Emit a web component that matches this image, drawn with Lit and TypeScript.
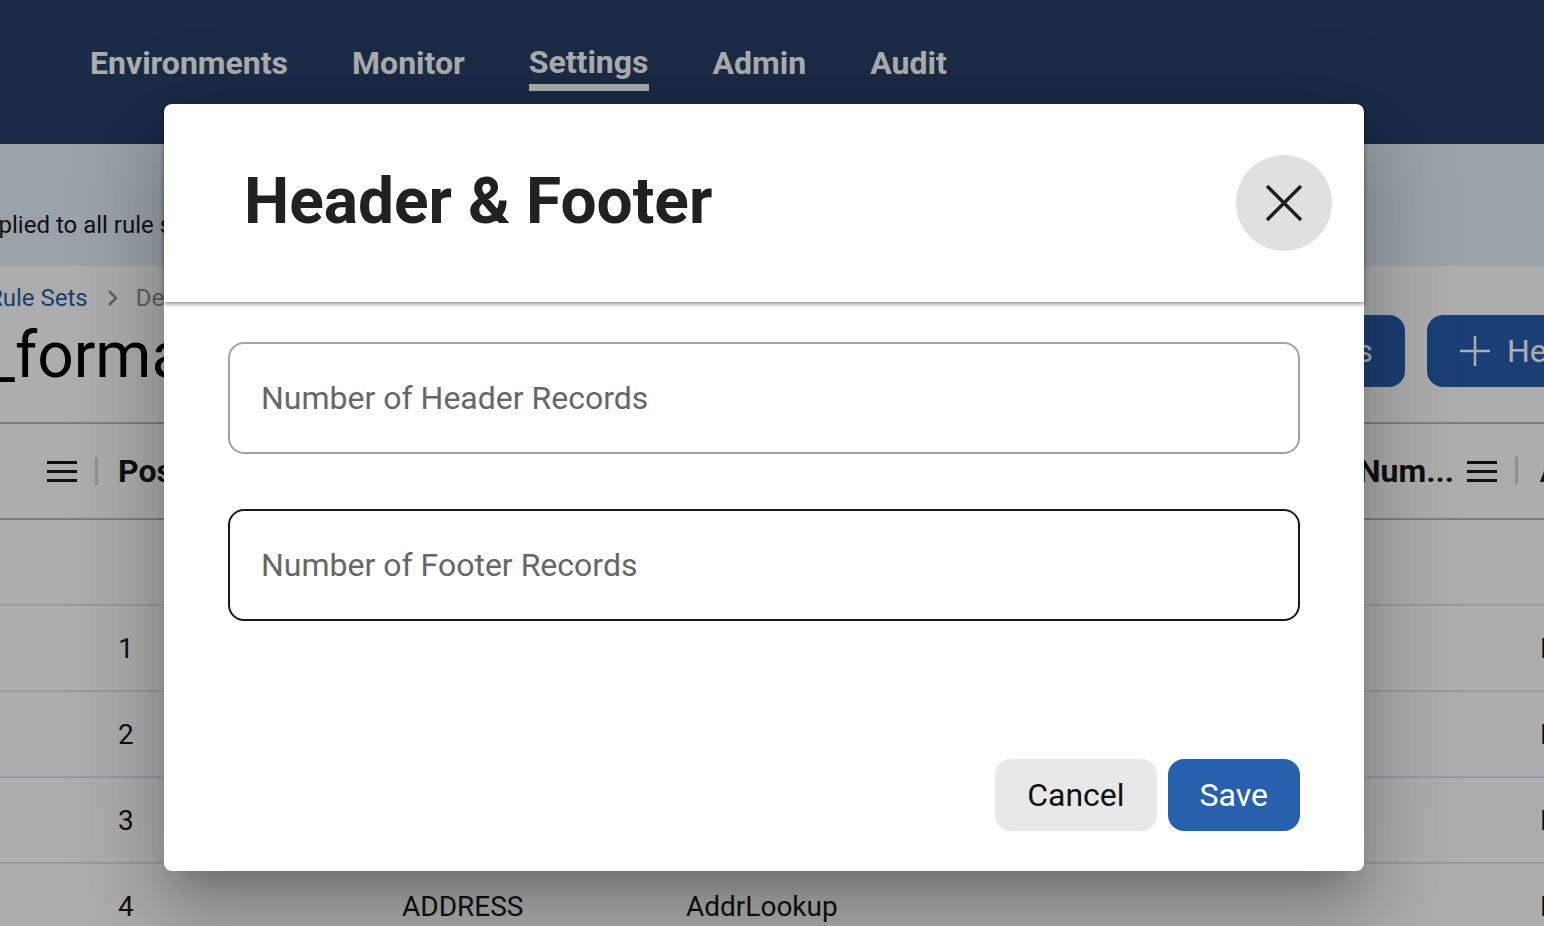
import { LitElement, html, css } from 'lit'
import { customElement } from 'lit/decorators.js'

const navItems = ['Environments', 'Monitor', 'Settings', 'Admin', 'Audit']
const rows = [
  ['', '', '', ''],
  ['1', '', '', 'E'],
  ['2', '', '', 'E'],
  ['3', '', '', 'E'],
  ['4', 'ADDRESS', 'AddrLookup', 'E']
]

const menuIcon = html`
  <svg class="menu-icon" width="30" height="21" viewBox="0 0 30 21" aria-hidden="true">
    <path d="M0 1.5h30M0 10.5h30M0 19.5h30" stroke="#191919" stroke-width="3" fill="none"></path>
  </svg>
`

@customElement('app-root')
export class AppRoot extends LitElement {
  static styles = [
    css`
      * {box-sizing: border-box}

      :host {
        display: block;
        position: relative;
        width: 100%;
        height: 100vh;
        overflow: hidden;
        background: #fff;
        color: #191919;
        font-family: Roboto, "Liberation Sans", sans-serif;
      }

      .nav {
        display: flex;
        align-items: flex-start;
        gap: 64px;
        height: 144px;
        padding: 40px 0 0 90px;
        background: #283f68;
      }

      .nav-item {
        margin-top: 1px;
        color: #fff;
        font-size: 32px;
        font-weight: 700;
        line-height: 44px;
      }

      .nav-item.active {
        margin-top: 0;
        border-bottom: 7px solid #fff;
      }

      .banner {
        display: flex;
        align-items: center;
        height: 122px;
        padding-top: 40px;
        background: #e5f0fb;
        font-size: 24px;
      }

      .banner span {
        margin-left: -28px;
        white-space: nowrap;
      }

      .toolbar {
        display: flex;
        justify-content: space-between;
        height: 156px;
      }

      .crumbs {
        display: flex;
        align-items: center;
        height: 28px;
        margin-top: 18px;
        font-size: 24px;
        color: #8f8f8f;
      }

      .crumb-link {
        margin-left: -12px;
        color: #275dac;
      }

      .crumbs svg {
        margin: 0 17px 0 19px;
      }

      h2 {
        margin: 8px 0 0 -14px;
        font-size: 64px;
        font-weight: 400;
        line-height: 72px;
        white-space: nowrap;
        color: #000;
      }

      .actions {
        display: flex;
        flex: 0 0 344px;
        gap: 22px;
        height: 72px;
        margin-top: 49px;
        overflow: hidden;
      }

      .action {
        display: flex;
        flex: none;
        align-items: center;
        height: 72px;
        border-radius: 16px;
        background: #275dac;
        color: #fff;
        font-size: 32px;
        white-space: nowrap;
      }

      .action.rules {
        justify-content: flex-end;
        width: 205px;
        padding-right: 32px;
      }

      .action.add {
        gap: 17px;
        width: 220px;
        padding-left: 33px;
      }

      .head-row, .row {
        display: grid;
        grid-template-columns: 118px 284px 284px 1fr auto;
        align-items: center;
        white-space: nowrap;
      }

      .head-row {
        height: 98px;
        border-top: 2px solid #b9b9b9;
        border-bottom: 2px solid #b9b9b9;
        font-size: 32px;
        font-weight: 700;
      }

      .head-left {
        display: flex;
        align-items: center;
        gap: 18px;
        padding-left: 47px;
      }

      .head-right {
        display: flex;
        grid-column: 5;
        align-items: center;
        margin-right: -24px;
      }

      .head-right .menu-icon {
        margin: 0 18px 0 13px;
      }

      .head-right b {
        width: 28px;
        margin-left: 22px;
        font-size: 32px;
      }

      .divider {
        flex: none;
        width: 3px;
        height: 28px;
        background: #d4d4d4;
      }

      .row {
        height: 86px;
        border-bottom: 2px solid #e2e5f0;
        font-size: 28px;
      }

      .row .end {
        grid-column: 5;
        width: 4px;
        margin-right: 0;
      }

      .scrim {
        position: absolute;
        inset: 0;
        background: rgba(0, 0, 0, .32);
      }

      .modal {
        position: absolute;
        top: 104px;
        left: 164px;
        display: flex;
        flex-direction: column;
        width: 1200px;
        height: 767px;
        border-radius: 8px;
        background: #fff;
        box-shadow:
          0 22px 30px -14px rgba(0, 0, 0, .2),
          0 48px 76px 6px rgba(0, 0, 0, .14),
          0 18px 92px 16px rgba(0, 0, 0, .12);
      }

      .modal-head {
        display: flex;
        flex: none;
        align-items: center;
        justify-content: space-between;
        height: 198px;
        padding: 0 32px 0 80px;
        border-radius: 8px 8px 0 0;
        box-shadow: 0 2px 4px rgba(0, 0, 0, .45);
      }

      h1 {
        margin: 0 0 3px;
        color: #212121;
        font-size: 64px;
        font-weight: 700;
        line-height: 76px;
      }

      .close {
        display: flex;
        align-items: center;
        justify-content: center;
        width: 96px;
        height: 96px;
        padding: 0;
        border: 0;
        border-radius: 50%;
        background: #e0e0e0;
      }

      .modal-body {
        display: flex;
        flex: 1;
        flex-direction: column;
        gap: 55px;
        padding: 40px 64px 0;
      }

      input {
        width: 100%;
        height: 112px;
        padding: 0 31px;
        border: 2px solid #a3a3a3;
        border-radius: 16px;
        outline: none;
        background: #fff;
        color: #212121;
        font-family: inherit;
        font-size: 32px;
      }

      input::placeholder {
        color: #666;
        opacity: 1;
      }

      input.focused {
        border-color: #191919;
      }

      .modal-foot {
        display: flex;
        flex: none;
        justify-content: flex-end;
        gap: 11px;
        padding: 0 64px 40px;
      }

      .btn {
        height: 72px;
        padding: 0 32px;
        border: 0;
        border-radius: 16px;
        font-family: inherit;
        font-size: 32px;
      }

      .btn.cancel {
        background: #e8e8e8;
        color: #111;
      }

      .btn.save {
        background: #2760ac;
        color: #fff;
      }
    `
  ]

  render () {
    return html`
      <nav class="nav">
        ${navItems.map(item => html`
          <div class="nav-item ${item === 'Settings' ? 'active' : ''}">${item}</div>
        `)}
      </nav>
      <div class="banner"><span>applied to all rule sets</span></div>
      <div class="toolbar">
        <div>
          <div class="crumbs">
            <span class="crumb-link">Rule Sets</span>
            <svg width="12" height="18" viewBox="0 0 12 18" aria-hidden="true">
              <path d="M2 2l7 7-7 7" stroke="#8f8f8f" stroke-width="2.5" fill="none"></path>
            </svg>
            <span>Details</span>
          </div>
          <h2>_format</h2>
        </div>
        <div class="actions">
          <div class="action rules">Footers</div>
          <div class="action add">
            <svg width="30" height="30" viewBox="0 0 30 30" aria-hidden="true">
              <path d="M15 0v30M0 15h30" stroke="#fff" stroke-width="2.5" fill="none"></path>
            </svg>
            Header
          </div>
        </div>
      </div>
      <div class="head-row">
        <div class="head-left">${menuIcon}<span class="divider"></span></div>
        <span>Pos</span>
        <span class="head-right">
          Num...${menuIcon}<span class="divider"></span><b>A</b>
        </span>
      </div>
      ${rows.map(row => html`
        <div class="row">
          <span></span>
          <span>${row[0]}</span>
          <span>${row[1]}</span>
          <span>${row[2]}</span>
          <span class="end">${row[3]}</span>
        </div>
      `)}

      <div class="scrim"></div>
      <section class="modal">
        <header class="modal-head">
          <h1>Header &amp; Footer</h1>
          <button class="close" aria-label="Close">
            <svg width="38" height="38" viewBox="0 0 38 38" aria-hidden="true">
              <path d="M2 2l34 34M36 2L2 36" stroke="#1f1f1f" stroke-width="3.4" fill="none"></path>
            </svg>
          </button>
        </header>
        <div class="modal-body">
          <input placeholder="Number of Header Records">
          <input class="focused" placeholder="Number of Footer Records">
        </div>
        <footer class="modal-foot">
          <button class="btn cancel">Cancel</button>
          <button class="btn save">Save</button>
        </footer>
      </section>
    `
  }
}
